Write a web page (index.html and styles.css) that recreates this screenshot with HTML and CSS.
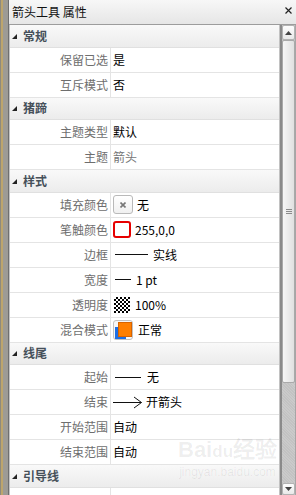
FILE: index.html
```html
<!DOCTYPE html>
<html lang="zh-CN">
<head>
    <meta charset="UTF-8">
    <title>箭头工具 属性</title>
    <link rel="stylesheet" href="styles.css">
</head>
<body>
    <div class="window">
        <div class="edge"></div>
        <div class="panel">
            <div class="titlebar">
                <span class="title">箭头工具 属性</span>
                <svg class="close" width="7" height="7" viewBox="0 0 7 7"><path d="M0.5 0.5L6.5 6.5M6.5 0.5L0.5 6.5" stroke="#222" stroke-width="1.2"/></svg>
            </div>
            <div class="content">
                <div class="grid">
                    <div class="cat"><svg class="tri" width="5" height="5" viewBox="0 0 5 5"><polygon points="5,0 5,5 0,5" fill="#222"/></svg>常规</div>
                    <div class="prop"><div class="label">保留已选</div><div class="value">是</div></div>
                    <div class="prop"><div class="label">互斥模式</div><div class="value">否</div></div>

                    <div class="cat"><svg class="tri" width="5" height="5" viewBox="0 0 5 5"><polygon points="5,0 5,5 0,5" fill="#222"/></svg>猪蹄</div>
                    <div class="prop"><div class="label">主题类型</div><div class="value">默认</div></div>
                    <div class="prop"><div class="label">主题</div><div class="value muted">箭头</div></div>

                    <div class="cat"><svg class="tri" width="5" height="5" viewBox="0 0 5 5"><polygon points="5,0 5,5 0,5" fill="#222"/></svg>样式</div>
                    <div class="prop"><div class="label">填充颜色</div><div class="value">
                        <span class="swatch-none"><svg width="6" height="6" viewBox="0 0 6 6"><path d="M0.5 0.5L5.5 5.5M5.5 0.5L0.5 5.5" stroke="#777" stroke-width="1.6"/></svg></span>
                        <span class="gap4">无</span>
                    </div></div>
                    <div class="prop"><div class="label">笔触颜色</div><div class="value">
                        <span class="swatch-red"></span>
                        <span class="gap4">255,0,0</span>
                    </div></div>
                    <div class="prop"><div class="label">边框</div><div class="value">
                        <span class="line line-long"></span>
                        <span class="gap5">实线</span>
                    </div></div>
                    <div class="prop"><div class="label">宽度</div><div class="value">
                        <span class="line line-short"></span>
                        <span class="gap5">1 pt</span>
                    </div></div>
                    <div class="prop"><div class="label">透明度</div><div class="value">
                        <span class="checker"></span>
                        <span class="gap5">100%</span>
                    </div></div>
                    <div class="prop"><div class="label">混合模式</div><div class="value">
                        <span class="blend"><span class="blend-back"></span><span class="blend-front"></span></span>
                        <span class="gap5">正常</span>
                    </div></div>

                    <div class="cat"><svg class="tri" width="5" height="5" viewBox="0 0 5 5"><polygon points="5,0 5,5 0,5" fill="#222"/></svg>线尾</div>
                    <div class="prop"><div class="label">起始</div><div class="value">
                        <span class="line line-mid"></span>
                        <span class="gap6">无</span>
                    </div></div>
                    <div class="prop"><div class="label">结束</div><div class="value">
                        <svg class="arrow" width="30" height="13" viewBox="0 0 30 13"><path d="M0 6.5H28.5M21 1L28.5 6.5L21 12" fill="none" stroke="#111" stroke-width="1"/></svg>
                        <span class="gap3">开箭头</span>
                    </div></div>
                    <div class="prop"><div class="label">开始范围</div><div class="value">自动</div></div>
                    <div class="prop"><div class="label">结束范围</div><div class="value">自动</div></div>

                    <div class="cat"><svg class="tri" width="5" height="5" viewBox="0 0 5 5"><polygon points="5,0 5,5 0,5" fill="#222"/></svg>引导线</div>
                    <div class="prop"><div class="label"></div><div class="value"></div></div>

                    <div class="watermark">
                        <div class="wm-logo">Bai<span class="wm-du">du</span>经验</div>
                        <div class="wm-url">jingyan.baidu.com</div>
                    </div>
                </div>
                <div class="scrollbar">
                    <div class="sb-btn"><svg width="7" height="4" viewBox="0 0 7 4"><polygon points="3.5,0 7,4 0,4" fill="#444"/></svg></div>
                    <div class="sb-thumb"><span class="grip"></span></div>
                    <div class="sb-track"></div>
                    <div class="sb-btn sb-down"><svg width="7" height="4" viewBox="0 0 7 4"><polygon points="0,0 7,0 3.5,4" fill="#444"/></svg></div>
                </div>
            </div>
        </div>
    </div>
</body>
</html>
```

FILE: styles.css
```css
* {
    box-sizing: border-box;
}

body {
    margin: 0;
    width: 296px;
    height: 495px;
    overflow: hidden;
    font-family: "Noto Sans CJK SC", "Noto Sans", sans-serif;
    font-size: 12px;
    background-color: #fff;
    color: #000;
}

.window {
    display: flex;
    height: 495px;
}

/* dark frame strip on the left */
.edge {
    width: 9px;
    flex: none;
    background: linear-gradient(to right, #8e8a7e 0 1px, #bda56c 1px 3px, #9d9b95 3px 8px, #6f6f6f 8px 9px);
}

.panel {
    flex: 1;
    min-width: 0;
    display: flex;
    flex-direction: column;
}

.titlebar {
    height: 25px;
    flex: none;
    display: flex;
    align-items: center;
    justify-content: space-between;
    padding: 0 4px 1px 3px;
    background: linear-gradient(#f7f7f7, #e6e6e6);
    border-bottom: 1px solid #9c9c9c;
}

.title {
    font-size: 12px;
    line-height: 16px;
    color: #111;
}

.close {
    margin-top: -3px;
}

.content {
    flex: 1;
    min-height: 0;
    display: flex;
}

.grid {
    flex: 1;
    position: relative;
    overflow: hidden;
    border-left: 1px solid #c4c4c4;
}

.cat {
    height: 22.5px;
    display: flex;
    align-items: center;
    padding-left: 2px;
    background: linear-gradient(#f9f9f9, #ececec);
    border-bottom: 1px solid #e0e0e0;
    font-weight: bold;
    color: #46505a;
    line-height: 16px;
}

.tri {
    margin-right: 6px;
    margin-top: 1px;
}

.prop {
    height: 25px;
    display: flex;
    border-bottom: 1px solid #e4e4e4;
    line-height: 16px;
}

.label {
    width: 101px;
    flex: none;
    display: flex;
    align-items: center;
    justify-content: flex-end;
    padding-right: 2px;
    color: #6e6e6e;
    border-right: 1px solid #e4e4e4;
}

.value {
    flex: 1;
    display: flex;
    align-items: center;
    padding-left: 2px;
    white-space: nowrap;
}

.value.muted {
    color: #777;
}

.gap3 { margin-left: 3px; }
.gap4 { margin-left: 4px; }
.gap5 { margin-left: 5px; }
.gap6 { margin-left: 6px; }

.swatch-none {
    width: 20px;
    height: 19px;
    display: flex;
    align-items: center;
    justify-content: center;
    border: 1px solid #b9b9b9;
    border-radius: 3px;
    background: linear-gradient(#fff, #f0f0f0);
}

.swatch-red {
    width: 18px;
    height: 17px;
    border: 2px solid #e60000;
    border-radius: 3px;
    background-color: #fff;
}

.line {
    height: 1px;
    margin-left: 2px;
    background-color: #111;
}

.line-long { width: 33px; }
.line-short { width: 16px; }
.line-mid { width: 26px; }

.checker {
    width: 16px;
    height: 16px;
    margin-left: 1px;
    background: repeating-conic-gradient(#000 0 25%, #fff 0 50%) 0 0 / 4px 4px;
}

.blend {
    width: 20px;
    height: 20px;
    position: relative;
    border: 1px solid #c2c2c2;
    border-radius: 3px;
    background-color: #f7f7f7;
}

.blend-back {
    position: absolute;
    left: 1px;
    top: 6px;
    width: 11px;
    height: 12px;
    background-color: #1f6fe3;
}

.blend-front {
    position: absolute;
    left: 4px;
    top: 1px;
    width: 14px;
    height: 15px;
    background-color: #ff7f00;
    border: 1px solid #d86400;
}

.arrow {
    flex: none;
}

.watermark {
    position: absolute;
    left: 168px;
    top: 412px;
    color: rgba(0, 0, 0, 0.07);
    font-family: "Liberation Sans", sans-serif;
    text-align: center;
}

.wm-logo {
    font-size: 22px;
    font-weight: bold;
    line-height: 26px;
}

.wm-logo .wm-du {
    font-size: 17px;
}

.wm-url {
    font-size: 12px;
    line-height: 14px;
}

/* scrollbar on the right */
.scrollbar {
    width: 17px;
    flex: none;
    display: flex;
    flex-direction: column;
    border-left: 1px solid #c2c2c2;
    border-right: 1px solid #a6a6a6;
    padding-left: 2px;
    background: linear-gradient(to right, #8a8a8a 0 2px, #c4c4c4 2px);
}

.sb-btn {
    height: 15px;
    flex: none;
    display: flex;
    align-items: center;
    justify-content: center;
    background: linear-gradient(#fdfdfd, #e9e9e9);
    border: 1px solid #b3b3b3;
    border-radius: 2px;
}

.sb-down {
    height: 12px;
    align-items: flex-start;
    padding-top: 3px;
}

.sb-thumb {
    height: 343px;
    flex: none;
    display: flex;
    align-items: center;
    justify-content: center;
    background: linear-gradient(to right, #f6f6f6, #e0e0e0);
    border: 1px solid #a9a9a9;
    border-radius: 2px;
}

.grip {
    width: 6px;
    height: 5px;
    border-top: 1px solid #8a8a8a;
    border-bottom: 1px solid #8a8a8a;
    background: linear-gradient(#8a8a8a, #8a8a8a) 0 1px / 6px 1px no-repeat;
}

.sb-track {
    flex: 1;
    background: repeating-linear-gradient(45deg, #c2c2c2 0 1px, #cacaca 1px 2px);
}
```
